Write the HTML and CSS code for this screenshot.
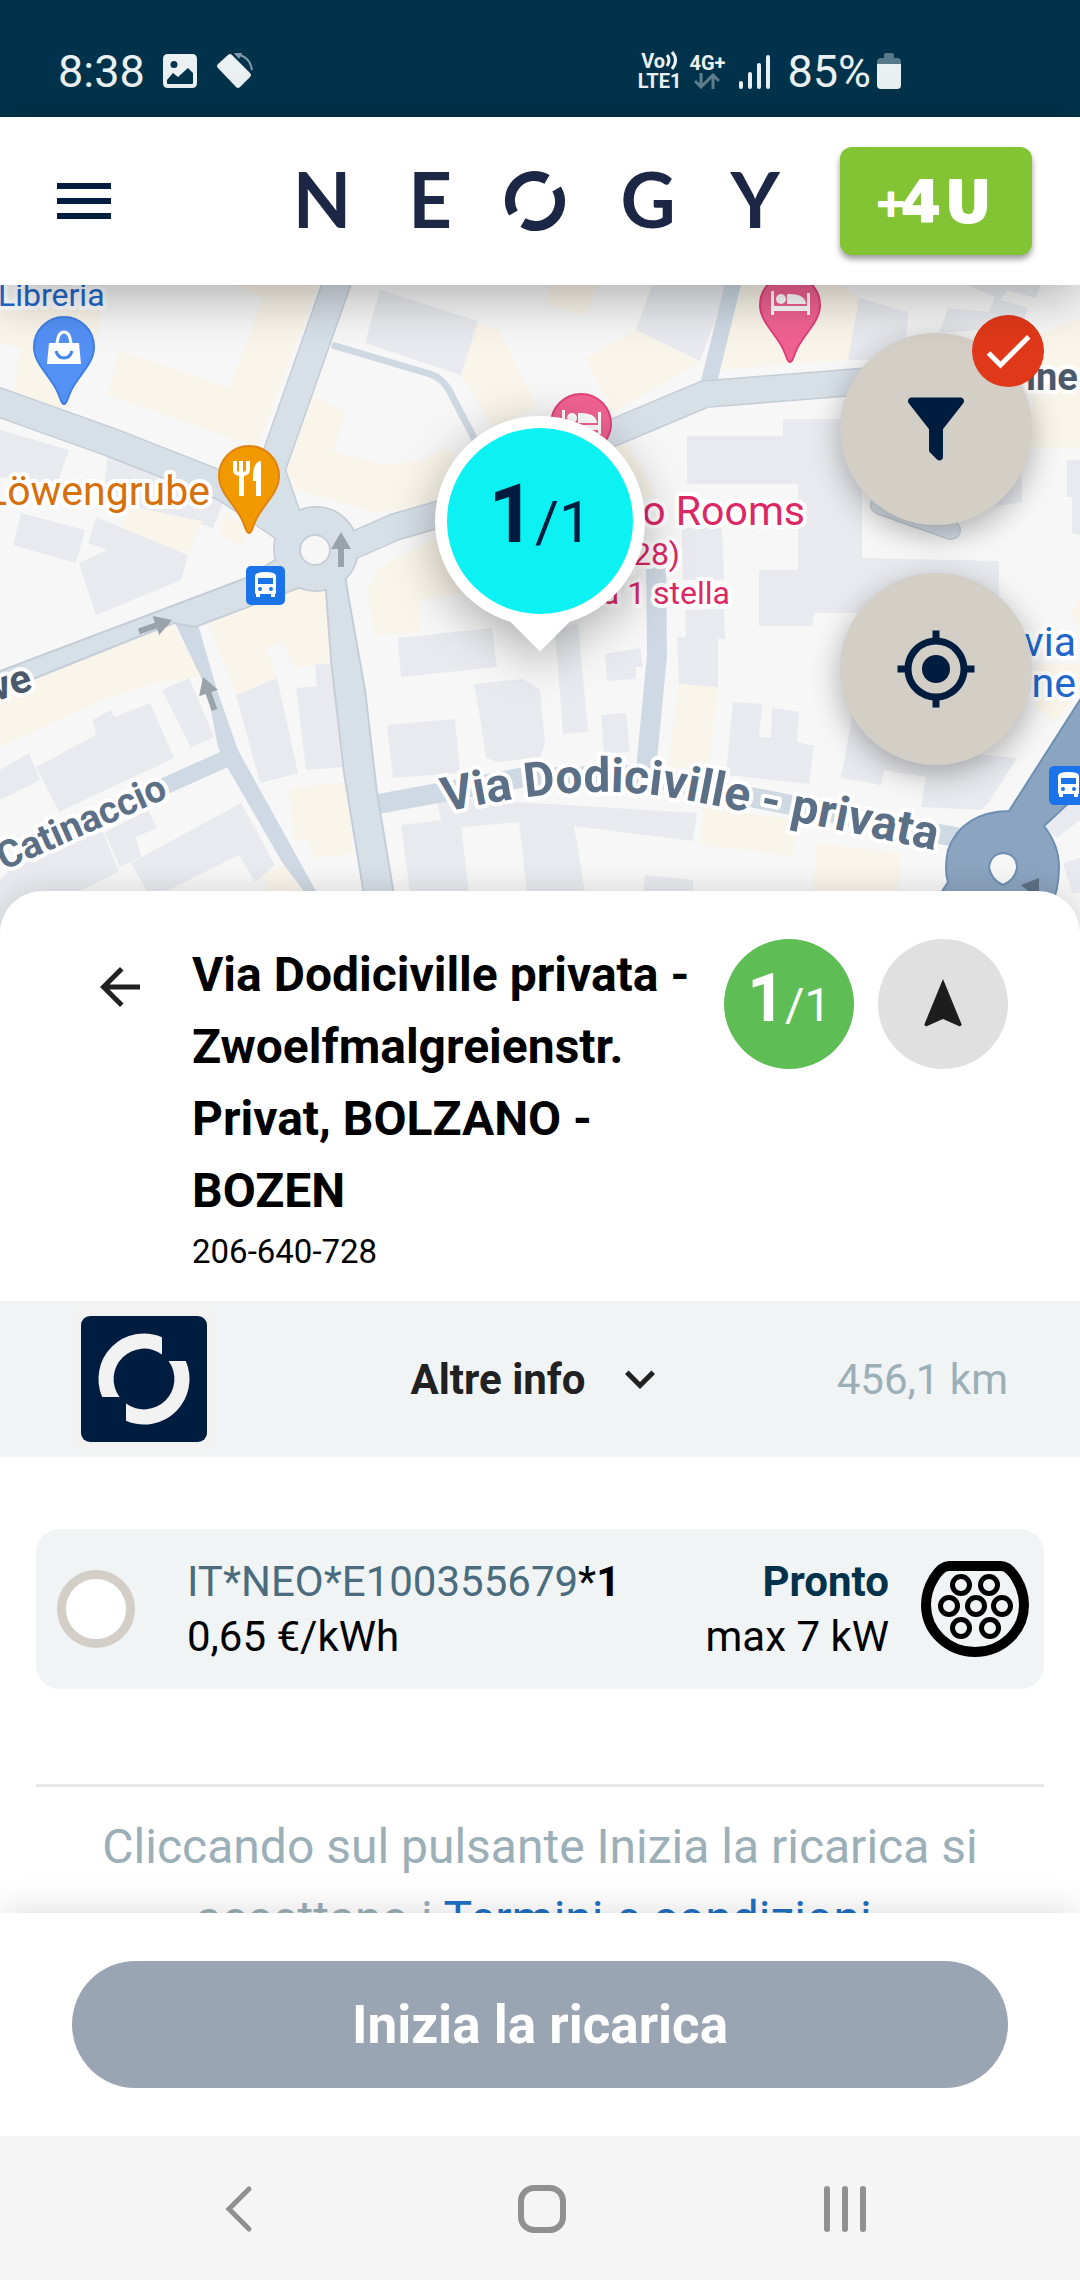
FILE: index.html
```html
<!DOCTYPE html>
<html lang="it">
<head>
    <meta charset="utf-8">
    <title>Neogy</title>
    <meta name="viewport" content="width=device-width, initial-scale=1">
    <link rel="stylesheet" href="styles.css">
</head>
<body>
    <div class="status-bar">
        <span class="status-time">8:38</span>
        <svg class="status-picture" width="34" height="34" viewBox="0 0 34 34">
            <path fill="#ebf0f2" fill-rule="evenodd" d="M5 0H29Q34 0 34 5V29Q34 34 29 34H5Q0 34 0 29V5Q0 0 5 0ZM11 7A3.500 3.500 0 1 0 11 14A3.500 3.500 0 1 0 11 7ZM4 29V26L10 19L15 23L25 14L30 19V29Q30 30 29 30H5Q4 30 4 29Z"/>
        </svg>
        <svg class="status-rotate" width="36" height="36" viewBox="0 0 36 36">
            <path fill="#ebf0f2" d="M11 2Q13 0 15 2L33 20Q35 22 33 24L23 34Q21 36 19 34L1 15Q-1 13 1 11Z"/>
            <path fill="none" stroke="#8199a6" stroke-width="2" d="M18 1Q33 3 35 17"/>
            <path fill="#8199a6" d="M17 0L25 0L22 6Z"/>
        </svg>
        <div class="status-right">
            <div class="status-volte">
                <span>Vo<svg width="13" height="20" viewBox="0 0 13 20"><path fill="none" stroke="#ebf0f2" stroke-width="3" d="M2 4Q6 9 2 15M7 1Q14 9 7 18"/></svg></span>
                <span>LTE1</span>
            </div>
            <div class="status-data">
                <span>4G+</span>
                <svg width="26" height="16" viewBox="0 0 26 16"><path fill="none" stroke="#5f7f8e" stroke-width="3" d="M7 0V14M1 8L7 14L13 8M19 16V2M13 8L19 2L25 8"/></svg>
            </div>
            <svg class="status-signal" width="32" height="35" viewBox="0 0 32 35">
                <path stroke="#ebf0f2" stroke-width="4" stroke-linecap="round" d="M3 29V33M12 20V33M21 11V33M30 3V33"/>
            </svg>
            <span class="status-percent">85%</span>
            <svg width="24" height="36" viewBox="0 0 24 36">
                <path fill="#597a8a" d="M7 2Q7 0 9 0H15Q17 0 17 2V5H20Q24 5 24 9V12H0V9Q0 5 4 5H7Z"/>
                <path fill="#ebf0f2" d="M0 11H24V32Q24 36 20 36H4Q0 36 0 32Z"/>
            </svg>
        </div>
    </div>

    <header class="app-bar">
        <button class="icon-button menu-button" aria-label="Menu">
            <svg width="72" height="72" viewBox="0 0 24 24"><path fill="#001c3f" d="M3,6H21V8H3V6M3,11H21V13H3V11M3,16H21V18H3V16Z"/></svg>
        </button>
        <svg class="brand" width="486" height="72" viewBox="0 0 486 72">
            <g class="brand-letters">
                <text x="24" y="63">N</text>
                <text x="132" y="63">E</text>
                <text x="350" y="63">G</text>
                <text x="457" y="63">Y</text>
            </g>
            <g transform="translate(237 36)" fill="none" stroke="#1c2746" stroke-width="10">
                <path d="M12 -21.600A24.500 24.500 0 0 0 -21.600 12"/>
                <path d="M-12 21.600A24.500 24.500 0 0 0 21.600 -12"/>
            </g>
        </svg>
        <button class="plus-button">
            <svg width="120" height="60" viewBox="0 0 120 60">
                <text x="-1" y="45" font-size="38">+</text>
                <text x="25" y="51" font-size="57">4</text>
                <text x="69" y="51" font-size="57">U</text>
            </svg>
        </button>
    </header>

    <main class="map">
        <svg class="map-canvas" viewBox="0 285 1080 648" preserveAspectRatio="xMidYMid slice">
            <defs>
                <path id="pin" d="M0,57C-3,57 -3,52 -6,46C-12,30 -30,18 -30,0A30,30 0 0 1 30,0C30,18 12,30 6,46C3,52 3,57 0,57Z"/>
                <path id="arrow" d="M0,0L10,17H3V35H-3V17H-10Z"/>
                <g id="bed">
                    <path d="M-19,-14H-16V1H17V-12H20V10H17V6H-16V10H-19Z"/>
                    <circle cx="-9" cy="-6" r="5"/>
                    <path d="M-3,-11Q15,-12 16,-1H-3Z"/>
                </g>
                <g id="bus">
                    <rect width="39" height="39" rx="5" fill="#1a73e8"/>
                    <path fill="#fff" fill-rule="evenodd" d="M9,10Q9,6 19.500,6Q30,6 30,10V27Q30,28 29,28V31H25V28H14V31H10V28Q9,28 9,27ZM12,12V18H27V12ZM12,23A2,2 0 1 0 16,23A2,2 0 1 0 12,23ZM23,23A2,2 0 1 0 27,23A2,2 0 1 0 23,23Z"/>
                </g>
                <path id="street-path" d="M445,812C522,795 600,784 680,799S860,834 980,860"/>
            </defs>
            <rect y="285" width="1080" height="648" fill="#f7f7f7"/>

            <!-- shops and public buildings -->
            <g class="area-shop">
                <path d="M0,305L102,311L95,350L68,408L13,401L20,347L0,343Z"/>
                <path d="M234,285L318,285L257,447L107,395L119,350L229,388L263,298Z"/>
                <path d="M312,395L346,413L333,452L386,465L424,460L442,448L455,453L437,508L372,512L282,485Z"/>
                <path d="M477,322L499,330L537,407L492,427L461,375Z"/>
                <path d="M436,538L379,567L368,590L374,635L419,633L420,600L480,590V538Z"/>
                <path d="M227,510L248,533L241,547L219,533Z"/>
                <path d="M0,695L38,677L138,637L172,625L203,677L158,682L110,697L0,747Z"/>
                <path d="M207,620L294,587L325,578L330,662L294,668L282,643L265,648L277,677L236,695Z"/>
                <path d="M289,788L346,783L353,853L312,858L308,840H294Z"/>
                <path d="M262,875L288,863L303,893H268Z"/>
                <path d="M679,684L718,687L709,768L667,767Z"/>
                <path d="M704,808L797,820L793,856L700,845Z"/>
                <path d="M817,843L900,853L898,893H812Z"/>
                <path d="M1036,663H1080V690L1055,723L1036,707ZM1070,613L1080,600V630Z"/>
                <path d="M636,330L700,362L612,413L600,387L585,358Z"/>
                <path d="M550,285H597L586,316L545,303Z"/>
                <path d="M743,285H840L859,297L848,360L712,370Z"/>
                <path d="M614,447L629,445L654,493L640,500Z"/>
                <path d="M1080,317L1032,337V447H1080Z"/>
            </g>

            <!-- houses -->
            <g class="area-house">
                <path d="M380,290L478,321L461,375L365,343Z"/>
                <path d="M0,430L69,450L57,484L0,477Z"/>
                <path d="M108,452L145,460L227,493L213,528L103,497Z"/>
                <path d="M21,513L85,530L76,563L13,545Z"/>
                <path d="M96,517L188,555L181,580L96,615L79,563L107,550L88,543Z"/>
                <path d="M162,690L189,678L214,737L191,748Z"/>
                <path d="M93,720L110,710L115,717L150,703L174,758L59,812L36,767L96,735Z"/>
                <path d="M0,770L29,753L40,780L0,800Z"/>
                <path d="M236,695L277,678L298,773L260,783Z"/>
                <path d="M296,688L317,686L315,665L331,663L342,767L306,770Z"/>
                <path d="M131,863L241,803L275,865L255,882L239,855L169,890L148,893Z"/>
                <path d="M0,880L30,850L103,832L119,872L40,910L0,925Z"/>
                <path d="M105,832L120,867L141,857L136,837L157,828L148,810Z"/>
                <path d="M398,638L492,628L497,667L401,677Z"/>
                <path d="M387,725L455,719L460,773L393,778Z"/>
                <path d="M474,684L523,679L540,690L545,743L540,757L496,762L486,757L479,712Z"/>
                <path d="M401,825L460,818L469,893H410Z"/>
                <path d="M436,797L697,813L693,841L574,826L585,893H527L519,822L443,829Z"/>
                <path d="M555,630L578,623L588,732L563,734Z"/>
                <path d="M605,654L640,648L643,667H636V679L607,681Z"/>
                <path d="M601,715L626,713L630,752L604,753Z"/>
                <path d="M685,610L724,609L725,639L686,637Z"/>
                <path d="M677,637L718,638V687L679,684Z"/>
                <path d="M733,702L762,704L759,737L771,738L772,708L799,712L797,742L814,746L809,784L726,775Z"/>
                <path d="M645,875L693,880V893H643Z"/>
                <path d="M852,717L930,750L1017,758L989,802L981,810L921,807L926,777L884,770L881,785L841,778Z"/>
                <path d="M1044,826L1080,795V820L1057,838ZM1063,863L1080,858V893H1072Z"/>
                <path d="M652,285H728L700,361L636,330Z"/>
                <path d="M859,298L908,312L905,360H848Z"/>
                <path d="M687,436H783V419H862V558L999,561V613H814L812,626H759V570H798V484H687Z"/>
                <path d="M682,528H722L724,580H683Z"/>
                <path d="M948,308L989,312L995,297L967,285H1041L1036,298L1007,290L1000,300L1028,308L1022,327L939,333Z"/>
                <path d="M1067,460H1080V535L1072,533V497H1067Z"/>
                <path d="M1000,470L1022,477V502L995,507Z"/>
            </g>
            <path class="area-shop" d="M132,507L202,521L188,555L120,527Z"/>

            <!-- small streets -->
            <g class="street-minor">
                <path d="M332,345L430,374Q442,378 449,390L475,440" stroke-width="7"/>
                <path d="M734,280L707,390" stroke-width="16"/>
                <path d="M656,560L657,655L646,770" stroke-width="20"/>
                <path d="M232,756L165,786L60,833" stroke-width="17"/>
                <path d="M378,804L520,778L640,775L740,795L960,838" stroke-width="20"/>
            </g>
            <path class="street-minor-fill" d="M174,621L197,621L217,690L238,750L317,893H305L282,862L226,765L218,747L207,690Z"/>

            <!-- main streets, edge first and fill on top -->
            <g class="street-edge">
                <path d="M-10,399L110,442L225,487L315,548" stroke-width="30"/>
                <path d="M338,280L271,470L290,525" stroke-width="29"/>
                <path d="M320,560L395,527L440,514L610,434L705,394L870,381L1000,374" stroke-width="28"/>
                <path d="M880,505L951,530" stroke-width="20" stroke-linecap="round"/>
                <circle cx="316" cy="549" r="42" stroke-width="2"/>
            </g>
            <path class="street-outline" d="M-5,673L246,578L275,560L325,575L345,575L349,600L365,690L377,793L394,895H364L344,773L331,660L325,578L195,627L174,623L138,637L38,677L-5,697Z"/>
            <g class="street-fill">
                <path d="M-10,399L110,442L225,487L315,548" stroke-width="27"/>
                <path d="M338,280L271,470L290,525" stroke-width="26"/>
                <path d="M320,560L395,527L440,514L610,434L705,394L870,381L1000,374" stroke-width="25"/>
                <path d="M880,505L951,530" stroke-width="17" stroke-linecap="round"/>
            </g>
            <circle cx="316" cy="549" r="41" fill="#d7dfe7"/>
            <circle cx="315" cy="550" r="15" fill="#f7f7f7" stroke="#c5ced7" stroke-width="2"/>

            <!-- trunk road -->
            <path class="street-trunk" d="M1009,811L1085,692V788L1044,826Q1059,845 1059,867Q1059,890 1050,910H930L948,882Q944,870 948,850Q962,812 1009,811Z"/>
            <path d="M1003,853Q1017,854 1017,868Q1015,880 1003,885Q991,880 989,867Q991,854 1003,853Z" fill="#f7f7f7" stroke="#6d8fb3" stroke-width="2"/>
            <path d="M1021,885L1039,878V900Z" fill="#5d7185"/>

            <g fill="#9aa3aa">
                <use href="#arrow" transform="translate(341 532)"/>
                <use href="#arrow" transform="translate(172 620) rotate(71)"/>
                <use href="#arrow" transform="translate(203 677) rotate(-19)"/>
            </g>

            <use href="#bus" x="246" y="566"/>
            <use href="#bus" x="1049" y="766"/>

            <g class="map-labels">
                <text class="label-blue" x="-2" y="306" font-size="32">Libreria</text>
                <text class="label-orange" x="210" y="505" font-size="41" text-anchor="end">Löwengrube</text>
                <text class="label-pink" x="805" y="525" font-size="41" text-anchor="end">o Rooms</text>
                <text class="label-pink" x="680" y="565" font-size="32" text-anchor="end">(28)</text>
                <text class="label-pink" x="730" y="604" font-size="32" text-anchor="end">a 1 stella</text>
                <text class="label-blue" x="1076" y="656" font-size="41" text-anchor="end">via</text>
                <text class="label-blue" x="1076" y="697" font-size="41" text-anchor="end">one</text>
                <text class="label-dark" x="1026" y="390" font-size="38">ine</text>
                <text class="label-dark" font-size="40" text-anchor="end" transform="translate(34 689) rotate(-18)">ve</text>
                <text class="label-street" font-size="38" text-anchor="end" transform="translate(169 797) rotate(-24)">Catinaccio</text>
                <text class="label-street" font-size="48"><textPath href="#street-path">Via Dodiciville - privata</textPath></text>
            </g>

            <!-- place pins -->
            <g transform="translate(64 347)">
                <use href="#pin" fill="#5491f5" stroke="#3f7fe4" stroke-width="2"/>
                <path fill="#fff" d="M-15,-4H15L17,17H-17Z"/>
                <path fill="none" stroke="#fff" stroke-width="3" d="M-7,-3Q-6,-15 0,-15Q6,-15 7,-3"/>
                <path fill="none" stroke="#4585ee" stroke-width="3" d="M-8,4Q-6,11 0,11Q6,11 8,4"/>
            </g>
            <g transform="translate(249 476)">
                <use href="#pin" fill="#f29900" stroke="#e08310" stroke-width="2"/>
                <path fill="none" stroke="#fff" stroke-width="4" d="M-14,-15V-6Q-14,-2 -8,-2Q-1,-2 -1,-6V-15M-8,-15V-3"/>
                <path fill="#fff" d="M-10,-3H-5V20H-10ZM12,-15V20H7V5H4Q3,-14 12,-15Z"/>
            </g>
            <g transform="translate(790 305)">
                <use href="#pin" fill="#f06292" stroke="#e0407a" stroke-width="2"/>
                <use href="#bed" fill="#fff"/>
            </g>
            <g transform="translate(581 424)">
                <use href="#pin" fill="#f06292" stroke="#e0407a" stroke-width="2"/>
                <use href="#bed" fill="#fff"/>
            </g>
        </svg>

        <button class="marker">
            <span class="marker-circle"><b>1</b><span>/1</span></span>
        </button>

        <div class="map-actions">
            <button class="fab" aria-label="Filtri">
                <svg width="84" height="84" viewBox="0 0 24 24"><path fill="#001c3f" d="M14,12V19.880C14.040,20.180 13.940,20.500 13.710,20.710C13.320,21.100 12.690,21.100 12.300,20.710L10.290,18.700C10.060,18.470 9.960,18.160 10,17.870V12H9.970L4.210,4.620C3.870,4.190 3.950,3.560 4.380,3.220C4.570,3.080 4.780,3 5,3H19C19.220,3 19.430,3.080 19.620,3.220C20.050,3.560 20.130,4.190 19.790,4.620L14.030,12H14Z"/></svg>
                <span class="fab-badge">
                    <svg width="60" height="60" viewBox="0 0 24 24"><path fill="#fff" d="M21,7L9,19L3.500,13.500L4.910,12.090L9,16.170L19.590,5.590L21,7Z"/></svg>
                </span>
            </button>
            <button class="fab" aria-label="La mia posizione">
                <svg width="84" height="84" viewBox="0 0 24 24"><path fill="#001c3f" d="M12,8A4,4 0 0,1 16,12A4,4 0 0,1 12,16A4,4 0 0,1 8,12A4,4 0 0,1 12,8M3.050,13H1V11H3.050C3.500,6.830 6.830,3.500 11,3.050V1H13V3.050C17.170,3.500 20.500,6.830 20.950,11H23V13H20.950C20.500,17.170 17.170,20.500 13,20.950V23H11V20.950C6.830,20.500 3.500,17.170 3.050,13M12,5A7,7 0 0,0 5,12A7,7 0 0,0 12,19A7,7 0 0,0 19,12A7,7 0 0,0 12,5Z"/></svg>
            </button>
        </div>
    </main>

    <section class="sheet">
        <div class="sheet-header">
            <button class="icon-button back-button" aria-label="Indietro">
                <svg width="60" height="60" viewBox="0 0 24 24"><path fill="#212121" d="M20,11V13H7.830L13.420,18.590L12,20L4,12L12,4L13.420,5.410L7.830,11H20Z"/></svg>
            </button>
            <div class="station">
                <h1>Via Dodiciville privata - Zwoelfmalgreienstr. Privat, BOLZANO - BOZEN</h1>
                <p>206-640-728</p>
            </div>
            <div class="sheet-actions">
                <div class="available"><b>1</b><span>/1</span></div>
                <button class="icon-button navigate-button" aria-label="Naviga">
                    <svg width="60" height="60" viewBox="0 0 24 24"><path fill="#1d1d1d" d="M12,2L4.500,20.290L5.210,21L12,18L18.790,21L19.500,20.290L12,2Z"/></svg>
                </button>
            </div>
        </div>

        <div class="info-bar">
            <svg class="operator-logo" width="144" height="144" viewBox="0 0 144 144">
                <rect width="144" height="144" fill="#f2f2f2"/>
                <rect x="9" y="9" width="126" height="126" rx="9" fill="#001c3f"/>
                <g transform="translate(72 72)" fill="#f2f2f2">
                    <path d="M18,-41.800A45.500,45.500 0 0 0 -41.800,18H-24.600A30.500,30.500 0 0 1 18,-24.600Z"/>
                    <path d="M-18,41.800A45.500,45.500 0 0 0 41.800,-18H24.600A30.500,30.500 0 0 1 -18,24.600Z"/>
                </g>
            </svg>
            <button class="more-info">
                Altre info
                <svg width="60" height="60" viewBox="0 0 24 24"><path fill="#212121" d="M7.410,8.580L12,13.170L16.590,8.580L18,10L12,16L6,10L7.410,8.580Z"/></svg>
            </button>
            <span class="distance">456,1 km</span>
        </div>

        <div class="sheet-body">
            <label class="connector" for="evse-1">
                <input type="radio" id="evse-1" name="evse">
                <span class="connector-main">
                    <span class="connector-id">IT*NEO*E100355679<span class="connector-number">*<b>1</b></span></span>
                    <span>0,65 €/kWh</span>
                </span>
                <span class="connector-state">
                    <b>Pronto</b>
                    <span>max 7 kW</span>
                </span>
                <svg width="108" height="96" viewBox="0 0 108 96" fill="none" stroke="#000">
                    <path stroke-width="10" d="M28,5H80C90,5 103,25 103,44A49,47 0 0 1 5,44C5,25 18,5 28,5Z"/>
                    <g stroke-width="5">
                        <circle cx="40" cy="24" r="8.500"/>
                        <circle cx="68" cy="24" r="8.500"/>
                        <circle cx="28" cy="45" r="8.500"/>
                        <circle cx="55" cy="45" r="8.500"/>
                        <circle cx="81" cy="45" r="8.500"/>
                        <circle cx="40" cy="67" r="8.500"/>
                        <circle cx="69" cy="67" r="8.500"/>
                    </g>
                </svg>
            </label>
            <p class="terms">Cliccando sul pulsante Inizia la ricarica si accettano i <a href="#">Termini e condizioni</a>.</p>
        </div>
    </section>

    <footer class="action-bar">
        <button class="start-button">Inizia la ricarica</button>
    </footer>

    <nav class="system-nav">
        <button class="icon-button" aria-label="Back">
            <svg width="48" height="48" viewBox="0 0 48 48"><path fill="none" stroke="#909090" stroke-width="5" stroke-linecap="round" d="M34 4L14 24L34 44"/></svg>
        </button>
        <button class="icon-button" aria-label="Home">
            <svg width="48" height="48" viewBox="0 0 48 48"><rect x="3" y="3" width="42" height="42" rx="13" fill="none" stroke="#909090" stroke-width="6"/></svg>
        </button>
        <button class="icon-button" aria-label="Recents">
            <svg width="48" height="48" viewBox="0 0 48 48"><path stroke="#909090" stroke-width="6" stroke-linecap="round" d="M6 4V44M24 4V44M42 4V44"/></svg>
        </button>
    </nav>
</body>
</html>
```

FILE: styles.css
```css
* {
    box-sizing: border-box;
}

body {
    margin: 0;
    height: 100vh;
    display: flex;
    flex-direction: column;
    overflow: hidden;
    background: #fff;
    color: #000;
    font-family: Roboto, Arial, sans-serif;
    font-size: 42px;
}

h1,
p {
    margin: 0;
}

svg {
    display: block;
    flex: none;
}

button {
    padding: 0;
    border: 0;
    background: none;
    color: inherit;
    font: inherit;
    cursor: pointer;
}

.icon-button {
    display: flex;
    align-items: center;
    justify-content: center;
}

/* Status bar */
.status-bar {
    flex: none;
    display: flex;
    align-items: center;
    height: 117px;
    padding: 25px 179px 0 58px;
    background: #00334b;
    color: #ebf0f2;
    font-size: 45px;
}

.status-picture {
    margin-left: 18px;
}

.status-rotate {
    margin-left: 20px;
}

.status-right {
    display: flex;
    align-items: center;
    margin-left: auto;
}

.status-volte,
.status-data {
    display: flex;
    flex-direction: column;
    align-items: center;
    font-size: 20px;
    line-height: 20px;
    font-weight: 700;
}

.status-volte span {
    display: flex;
}

.status-data {
    margin-left: 8px;
}

.status-signal {
    margin-left: 13px;
}

.status-percent {
    margin: 0 6px 0 17px;
}

/* App bar */
.app-bar {
    position: relative;
    z-index: 2;
    flex: none;
    display: flex;
    align-items: center;
    height: 168px;
    padding: 0 48px;
    background: #fff;
    box-shadow: 0 12px 48px rgba(0, 0, 0, 0.3);
}

.brand {
    margin-left: auto;
    overflow: visible;
}

.brand-letters {
    fill: #1c2746;
    font-family: Lato, sans-serif;
    font-size: 76px;
    font-weight: 700;
    text-anchor: middle;
}

.plus-button {
    display: flex;
    align-items: center;
    justify-content: center;
    width: 192px;
    height: 108px;
    margin-left: 56px;
    border-radius: 12px;
    background: #82c434;
    box-shadow: 0 4px 6px rgba(0, 0, 0, 0.4);
}

.plus-button svg {
    overflow: visible;
}

.plus-button text {
    fill: #fff;
    stroke: #fff;
    stroke-width: 2px;
    stroke-linejoin: round;
    font-family: "DejaVu Sans", sans-serif;
    font-weight: 700;
}

/* Map */
.map {
    position: relative;
    flex: none;
    height: 648px;
    overflow: hidden;
}

.map-canvas {
    width: 100%;
    height: 100%;
}

.area-shop {
    fill: #faf5ea;
}

.area-house {
    fill: #e8eaef;
}

.street-minor {
    fill: none;
    stroke: #cfd9e3;
}

.street-minor-fill {
    fill: #cfd9e3;
}

.street-edge {
    fill: none;
    stroke: #c5ced7;
}

.street-outline {
    fill: #d7dfe7;
    stroke: #c5ced7;
    stroke-width: 2px;
}

.street-fill {
    fill: none;
    stroke: #d7dfe7;
}

.street-trunk {
    fill: #8ba4bf;
    stroke: #6d8fb3;
    stroke-width: 2px;
}

.map-labels text {
    stroke: #fff;
    stroke-width: 8px;
    stroke-linejoin: round;
    paint-order: stroke;
}

.label-blue {
    fill: #2268cc;
}

.label-orange {
    fill: #d5700c;
}

.label-pink {
    fill: #dc2865;
}

.label-dark {
    fill: #4a5a6b;
    font-weight: 700;
}

.label-street {
    fill: #5b6f87;
    font-weight: 700;
}

.marker {
    position: absolute;
    top: 131px;
    left: 50%;
    transform: translateX(-50%);
    filter: drop-shadow(0 12px 24px rgba(0, 0, 0, 0.3));
}

.marker::before {
    content: "";
    position: absolute;
    bottom: -13px;
    left: 50%;
    width: 60px;
    height: 60px;
    margin-left: -30px;
    background: #fff;
    transform: rotate(45deg);
}

.marker-circle {
    position: relative;
    display: flex;
    align-items: baseline;
    justify-content: center;
    width: 210px;
    height: 210px;
    border: 12px solid #fff;
    border-radius: 50%;
    background: #0cf2f2;
    color: #001c3f;
    font-size: 58px;
    line-height: 174px;
}

.marker-circle b {
    font-size: 81px;
}

.map-actions {
    position: absolute;
    top: 48px;
    right: 48px;
    display: flex;
    flex-direction: column;
    gap: 48px;
}

.fab {
    position: relative;
    display: flex;
    align-items: center;
    justify-content: center;
    width: 192px;
    height: 192px;
    border-radius: 50%;
    background: #d3cec6;
    box-shadow: 0 9px 30px rgba(0, 0, 0, 0.3);
}

.fab-badge {
    position: absolute;
    top: -18px;
    right: -12px;
    display: flex;
    align-items: center;
    justify-content: center;
    width: 72px;
    height: 72px;
    border-radius: 50%;
    background: #e13819;
}

/* Station sheet */
.sheet {
    position: relative;
    z-index: 1;
    flex: 1;
    min-height: 0;
    margin-top: -42px;
    border-radius: 42px 42px 0 0;
    background: #fff;
    box-shadow: 0 0 30px rgba(0, 0, 0, 0.15);
}

.sheet-header {
    display: flex;
    align-items: flex-start;
    gap: 24px;
    padding: 48px 72px 24px;
}

.back-button {
    width: 96px;
    height: 96px;
}

.station {
    flex: 1;
}

.station h1 {
    font-size: 48px;
    line-height: 72px;
    font-weight: 700;
}

.station p {
    font-size: 33px;
    line-height: 50px;
}

.sheet-actions {
    display: flex;
    gap: 24px;
}

.available,
.navigate-button {
    width: 130px;
    height: 130px;
    border-radius: 50%;
}

.available {
    display: flex;
    align-items: baseline;
    justify-content: center;
    background: #5fbd55;
    color: #fff;
    font-size: 47px;
    line-height: 120px;
}

.available b {
    font-size: 66px;
}

.navigate-button {
    background: #e0e0e0;
}

.info-bar {
    display: grid;
    grid-template-columns: 1fr auto 1fr;
    align-items: center;
    padding: 6px 72px;
    background: #f0f4f5;
}

.more-info {
    display: flex;
    align-items: center;
    gap: 24px;
    color: #212121;
    font-weight: 700;
}

.distance {
    color: #9bafb8;
    text-align: right;
}

.sheet-body {
    padding: 72px 36px 0;
}

.connector {
    display: flex;
    align-items: center;
    padding: 25px 15px 25px 21px;
    border-radius: 24px;
    background: #f0f4f5;
    line-height: 55px;
}

.connector input {
    appearance: none;
    flex: none;
    width: 78px;
    height: 78px;
    margin: 0 52px 0 0;
    border: 9px solid #d3cec6;
    border-radius: 50%;
    background: #fff;
}

.connector-main,
.connector-state {
    display: flex;
    flex-direction: column;
}

.connector-main {
    flex: 1;
}

.connector-id {
    color: #4a6c7e;
}

.connector-number {
    color: #000;
}

.connector-state {
    margin-right: 32px;
    text-align: right;
}

.connector-state b {
    color: #00334b;
}

.terms {
    margin-top: 95px;
    padding-top: 24px;
    border-top: 3px solid #e8e8e8;
    color: #9bafb8;
    font-size: 48px;
    line-height: 72px;
    text-align: center;
}

.terms a {
    color: #1f70c4;
    text-decoration: none;
}

/* Bottom */
.action-bar {
    position: relative;
    z-index: 2;
    flex: none;
    padding: 48px 72px;
    background: #fff;
    box-shadow: 0 0 36px rgba(0, 0, 0, 0.15);
}

.start-button {
    display: block;
    width: 100%;
    height: 127px;
    border-radius: 64px;
    background: #9aa5b3;
    color: #fff;
    font-size: 53px;
    font-weight: 700;
}

.system-nav {
    position: relative;
    z-index: 3;
    flex: none;
    display: grid;
    grid-template-columns: repeat(3, 1fr);
    height: 144px;
    padding: 2px 84px 0 87px;
    background: #f5f5f5;
}
```
